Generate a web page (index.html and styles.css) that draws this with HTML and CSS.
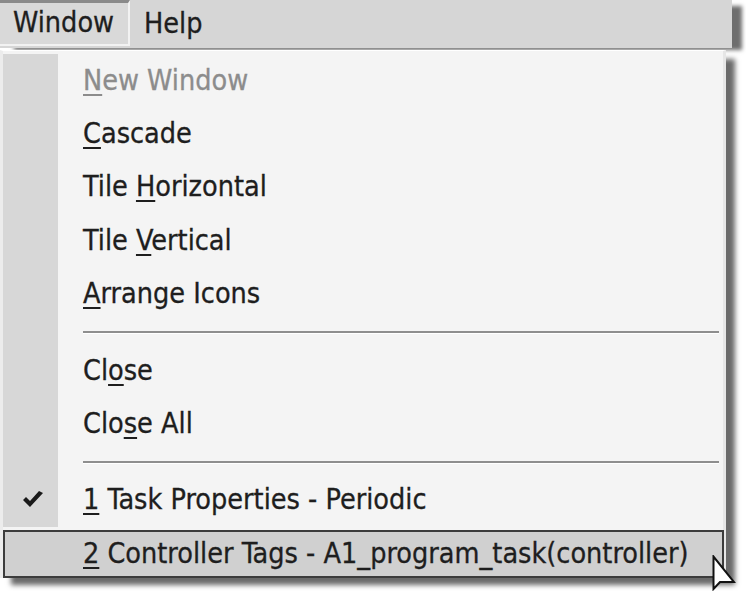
FILE: index.html
```html
<!DOCTYPE html>
<html>
<head>
<meta charset="utf-8">
<link rel="stylesheet" href="styles.css">
</head>
<body>
<div class="screen">
  <div class="menubar">
    <div class="top-item open"><span>Window</span></div>
    <div class="top-item"><span>Help</span></div>
  </div>
  <div class="menu">
    <div class="item disabled"><span class="gutter"></span><span class="label"><u>N</u>ew Window</span></div>
    <div class="item"><span class="gutter"></span><span class="label"><u>C</u>ascade</span></div>
    <div class="item"><span class="gutter"></span><span class="label">Tile <u>H</u>orizontal</span></div>
    <div class="item"><span class="gutter"></span><span class="label">Tile <u>V</u>ertical</span></div>
    <div class="item"><span class="gutter"></span><span class="label"><u>A</u>rrange Icons</span></div>
    <div class="sep"><span class="gutter"></span><span class="line"></span></div>
    <div class="item"><span class="gutter"></span><span class="label">Cl<u>o</u>se</span></div>
    <div class="item"><span class="gutter"></span><span class="label">Clo<u>s</u>e All</span></div>
    <div class="sep"><span class="gutter"></span><span class="line"></span></div>
    <div class="item"><span class="gutter"><svg class="check" viewBox="0 0 24 20" width="24" height="20"><path d="M2 10 L9 17 L22 3 L18 1 L9 11 L5 7 Z" fill="#1a1a1a"/></svg></span><span class="label"><u>1</u> Task Properties - Periodic</span></div>
    <div class="item hot"><span class="gutter"></span><span class="label"><u>2</u> Controller Tags - A1_program_task(controller)</span></div>
  </div>
  <svg class="cursor" viewBox="0 0 24 36" width="24" height="36"><path d="M1.5 1.5 L1.5 34 L8 27 L22 27 Z" fill="#ffffff" stroke="#111" stroke-width="2" stroke-linejoin="miter"/></svg>
</div>
</body>
</html>
```
FILE: styles.css
```css
html, body {
  margin: 0;
  padding: 0;
  background: #ffffff;
}
.screen {
  position: relative;
  width: 746px;
  height: 591px;
  overflow: hidden;
  font-family: "DejaVu Sans Condensed", "DejaVu Sans", sans-serif;
  font-size: 28.5px;
  color: #1e1e1e;
  -webkit-text-stroke: 0.3px currentColor;
}
.menubar {
  width: 732px;
  height: 48px;
  background: #d6d6d6;
  display: flex;
  align-items: stretch;
  box-shadow: 12px 4px 4px -2px #6e6e6e;
}
.top-item {
  padding: 0 14px;
  display: flex;
  align-items: center;
  box-sizing: border-box;
  height: 46px;
}
.top-item.open {
  width: 130px;
  border-top: 3px solid #8a8a8a;
  border-right: 2px solid #f2f2f2;
  border-bottom: 2px solid #f2f2f2;
  background: #d9d9d9;
  padding-left: 13px;
  padding-bottom: 2px;
}
.menu {
  width: 726px;
  margin-top: 2px;
  padding: 3px 0 0 0;
  height: 528px;
  box-sizing: border-box;
  background: #f4f4f4;
  border-left: 3px solid #ececec;
  border-right: 3px solid #e6e6e6;
  border-top: 1px solid #ffffff;
  box-shadow: 10px 8px 5px -1px #6a6a6a;
  position: relative;
}
.item {
  height: 53.4px;
  display: flex;
  align-items: stretch;
  box-sizing: border-box;
}
.gutter {
  width: 55px;
  flex: none;
  background: #d7d7d7;
  display: flex;
  align-items: center;
  justify-content: center;
}
.label {
  display: block;
  align-self: center;
  line-height: 34px;
  padding-left: 25px;
  white-space: nowrap;
}
.label u {
  text-decoration-thickness: 2px;
  text-underline-offset: 4px;
}
.disabled .label {
  color: #8c8c8c;
}
.sep {
  height: 23px;
  display: flex;
  align-items: stretch;
}
.sep .line {
  flex: 1;
  margin: 10px 4px 0 25px;
  height: 2px;
  background: #8e8e8e;
  border-bottom: 1px solid #ffffff;
}
.check {
  margin-left: 4px;
}
.item.hot {
  margin-top: 3px;
  height: 48px;
  width: 721px;
  background: #d0d0d0;
  border: 2px solid #3c3c3c;
  margin-left: 0;
}
.item.hot .gutter {
  background: transparent;
  width: 53px;
}
.cursor {
  position: absolute;
  left: 712px;
  top: 555px;
}
```
